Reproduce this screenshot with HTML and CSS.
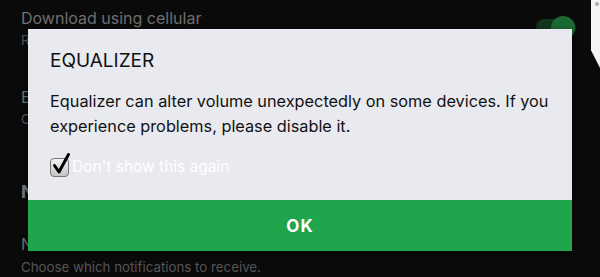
FILE: index.html
```html
<!DOCTYPE html>
<html>
<head>
<meta charset="utf-8">
<link rel="stylesheet" href="styles.css">
</head>
<body>
<div class="settings">
  <div class="row">
    <div class="title">Download using cellular</div>
    <div class="sub">Recommended setting: Off</div>
  </div>
  <div class="row row2">
    <div class="title">Equalizer</div>
    <div class="sub">Open the equalizer control panel.</div>
  </div>
  <div class="header">Notifications</div>
  <div class="row row3">
    <div class="title">Notifications</div>
    <div class="sub">Choose which notifications to receive.</div>
  </div>
</div>
<div class="toggle"><span class="track"></span><span class="knob"></span></div>
<div class="edge"></div>
<div class="dialog">
  <div class="dialog-body">
    <div class="dialog-title">EQUALIZER</div>
    <p class="dialog-text">Equalizer can alter volume unexpectedly on some devices. If you experience problems, please disable it.</p>
    <label class="check-row">
      <span class="checkbox">
        <svg class="tick" width="20" height="24" viewBox="0 0 20 24"><path d="M3.5 13.5 L8 20 L17.5 2.5" fill="none" stroke="#000" stroke-width="3" stroke-linecap="round" stroke-linejoin="round"/></svg>
      </span>
      <span class="check-label">Don't show this again</span>
    </label>
  </div>
  <div class="dialog-ok">OK</div>
</div>
</body>
</html>
```
FILE: styles.css
```css
html, body {
  margin: 0;
  padding: 0;
}
body {
  width: 600px;
  height: 277px;
  background: #0a0a0a;
  font-family: Inter, "Noto Sans", sans-serif;
  overflow: hidden;
  position: relative;
}
.settings {
  padding: 8px 21px 0;
  display: flex;
  flex-direction: column;
}
.title {
  font-size: 16px;
  line-height: 20px;
  color: #6f6f6f;
  white-space: nowrap;
}
.sub {
  font-size: 13.3px;
  line-height: 20px;
  margin-top: 2px;
  color: #555;
  white-space: nowrap;
}
.row2 {
  margin-top: 37px;
}
.header {
  margin-top: 53px;
  font-size: 18px;
  font-weight: 700;
  line-height: 20px;
  color: #777;
}
.row3 {
  margin-top: 32px;
}
.row3 .sub {
  margin-top: 4px;
  line-height: 19px;
}
.toggle {
  position: absolute;
  left: 536px;
  top: 14px;
  width: 44px;
  height: 26px;
}
.track {
  position: absolute;
  left: 0;
  top: 5px;
  width: 40px;
  height: 17px;
  border-radius: 9px;
  background: #11361c;
}
.knob {
  position: absolute;
  left: 15px;
  top: 2px;
  width: 24px;
  height: 24px;
  border-radius: 50%;
  background: #1a6a32;
}
.edge {
  position: absolute;
  right: 0;
  top: 0;
  width: 9px;
  height: 68px;
  background: #f4f4f4;
  clip-path: polygon(0 0, 100% 0, 100% 100%, 0 74%);
}
.edge::before {
  content: "";
  position: absolute;
  left: 4px;
  top: 2px;
  width: 4px;
  height: 4px;
  border-radius: 50%;
  background: #aaa;
}
.dialog {
  position: absolute;
  left: 28px;
  top: 29px;
  width: 544px;
  display: flex;
  flex-direction: column;
  box-shadow: 0 2px 6px rgba(0,0,0,0.5);
}
.dialog-body {
  background: #e9eaef;
  height: 171px;
  padding: 0 22px;
  display: flex;
  flex-direction: column;
}
.dialog-title {
  margin-top: 20px;
  font-size: 19px;
  line-height: 24px;
  color: #111;
}
.dialog-text {
  margin: 16px 0 0;
  font-size: 16.3px;
  line-height: 25px;
  color: #111;
}
.check-row {
  margin-top: 17px;
  display: flex;
  align-items: center;
}
.checkbox {
  position: relative;
  width: 19px;
  height: 19px;
  border: 1px solid #777;
  border-radius: 4px;
  background: linear-gradient(#f4f4f4, #c4c4c4);
  box-sizing: border-box;
  flex: none;
}
.tick {
  position: absolute;
  left: 0px;
  top: -7px;
}
.check-label {
  margin-left: 3px;
  font-size: 15.5px;
  line-height: 22px;
  color: #ffffff;
}
.dialog-ok {
  background: #1fa54c;
  height: 51px;
  display: flex;
  align-items: center;
  justify-content: center;
  color: #fff;
  font-weight: 700;
  font-size: 17px;
  letter-spacing: 1px;
}
```
